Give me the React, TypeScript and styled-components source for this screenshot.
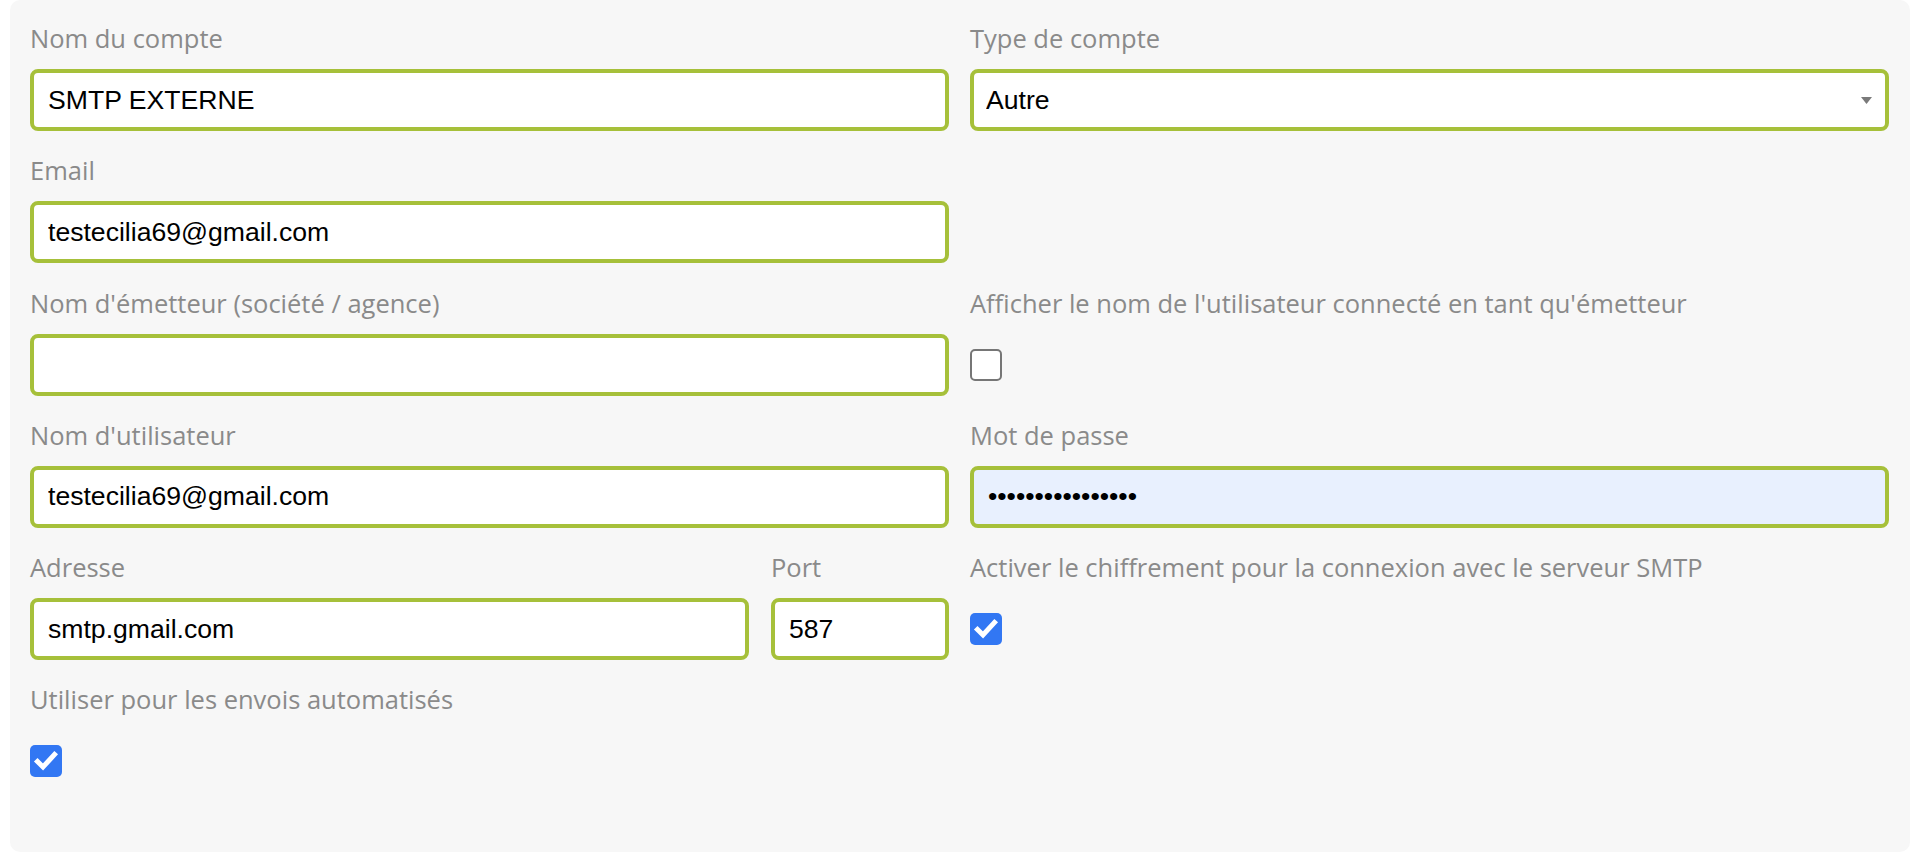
import React from "react";
import styled, { createGlobalStyle } from "styled-components";

const GlobalStyle = createGlobalStyle`
  html, body {
    margin: 0;
    padding: 0;
    background: #ffffff;
  }
  body {
    font-family: "Open Sans", "Liberation Sans", sans-serif;
  }
`;

const Panel = styled.form`
  margin: 0 9px 0 10px;
  background: #f7f7f7;
  border-radius: 10px;
  padding: 19px 21px 39.5px 20px;
  display: grid;
  grid-template-columns: 1fr 1fr;
  column-gap: 21px;
`;

const Field = styled.div`
  display: flex;
  flex-direction: column;
  margin-bottom: 20.25px;
  min-width: 0;
`;

const SplitField = styled.div`
  display: grid;
  grid-template-columns: 1fr 178px;
  column-gap: 22px;
`;

const Label = styled.label`
  font-family: "Open Sans", sans-serif;
  font-size: 25.5px;
  line-height: 39px;
  color: #8a8a8a;
  margin-bottom: 11px;
  white-space: nowrap;
`;

const TextInput = styled.input<{ $autofill?: boolean }>`
  box-sizing: border-box;
  width: 100%;
  height: 62px;
  border: 4px solid #a6c03a;
  border-radius: 8px;
  padding: 0 14px;
  margin: 0;
  font-family: "Liberation Sans", Arial, sans-serif;
  font-size: 26.6px;
  color: #000;
  background: ${(p) => (p.$autofill ? "#e8f0fe" : "#ffffff")};
  outline: none;
`;

const SelectWrap = styled.div`
  position: relative;
`;

const Select = styled.select`
  box-sizing: border-box;
  width: 100%;
  height: 62px;
  border: 4px solid #a6c03a;
  border-radius: 8px;
  padding: 0 12px;
  margin: 0;
  font-family: "Liberation Sans", Arial, sans-serif;
  font-size: 26.6px;
  color: #000;
  background: #ffffff;
  appearance: none;
  -webkit-appearance: none;
  outline: none;
`;

const Caret = styled.svg`
  position: absolute;
  right: 17px;
  top: 28px;
  pointer-events: none;
`;

const CheckSlot = styled.div`
  height: 62px;
  display: flex;
  align-items: center;
`;

const Box = styled.span<{ $checked?: boolean }>`
  box-sizing: border-box;
  width: 32px;
  height: 32px;
  border-radius: 5px;
  display: inline-flex;
  align-items: center;
  justify-content: center;
  background: ${(p) => (p.$checked ? "#3277f3" : "#ffffff")};
  border: ${(p) => (p.$checked ? "none" : "2px solid #767676")};
`;

function Checkbox({ checked }: { checked?: boolean }) {
  return (
    <CheckSlot>
      <Box $checked={checked} role="checkbox" aria-checked={!!checked}>
        {checked && (
          <svg width="32" height="32" viewBox="0 0 32 32" fill="none">
            <path d="M7.5 16.5 L13 22 L24.5 9.5" stroke="#ffffff" strokeWidth="5" strokeLinecap="square" strokeLinejoin="miter" />
          </svg>
        )}
      </Box>
    </CheckSlot>
  );
}

export default function App() {
  return (
    <>
      <GlobalStyle />
      <Panel onSubmit={(e) => e.preventDefault()}>
        <Field>
          <Label>Nom du compte</Label>
          <TextInput type="text" defaultValue="SMTP EXTERNE" />
        </Field>
        <Field>
          <Label>Type de compte</Label>
          <SelectWrap>
            <Select defaultValue="autre">
              <option value="autre">Autre</option>
              <option value="gmail">Gmail</option>
              <option value="outlook">Outlook</option>
            </Select>
            <Caret width="11" height="7" viewBox="0 0 11 7">
              <path d="M0 0 H11 L5.5 7 Z" fill="#7a7a7a" />
            </Caret>
          </SelectWrap>
        </Field>

        <Field>
          <Label>Email</Label>
          <TextInput type="text" defaultValue="testecilia69@gmail.com" />
        </Field>
        <div />

        <Field>
          <Label>Nom d'émetteur (société / agence)</Label>
          <TextInput type="text" defaultValue="" />
        </Field>
        <Field>
          <Label>Afficher le nom de l'utilisateur connecté en tant qu'émetteur</Label>
          <Checkbox />
        </Field>

        <Field>
          <Label>Nom d'utilisateur</Label>
          <TextInput type="text" defaultValue="testecilia69@gmail.com" />
        </Field>
        <Field>
          <Label>Mot de passe</Label>
          <TextInput type="password" $autofill defaultValue="abcdefghijklmnop" />
        </Field>

        <SplitField>
          <Field>
            <Label>Adresse</Label>
            <TextInput type="text" defaultValue="smtp.gmail.com" />
          </Field>
          <Field>
            <Label>Port</Label>
            <TextInput type="text" defaultValue="587" />
          </Field>
        </SplitField>
        <Field>
          <Label>Activer le chiffrement pour la connexion avec le serveur SMTP</Label>
          <Checkbox checked />
        </Field>

        <Field>
          <Label>Utiliser pour les envois automatisés</Label>
          <Checkbox checked />
        </Field>
        <div />
      </Panel>
    </>
  );
}
